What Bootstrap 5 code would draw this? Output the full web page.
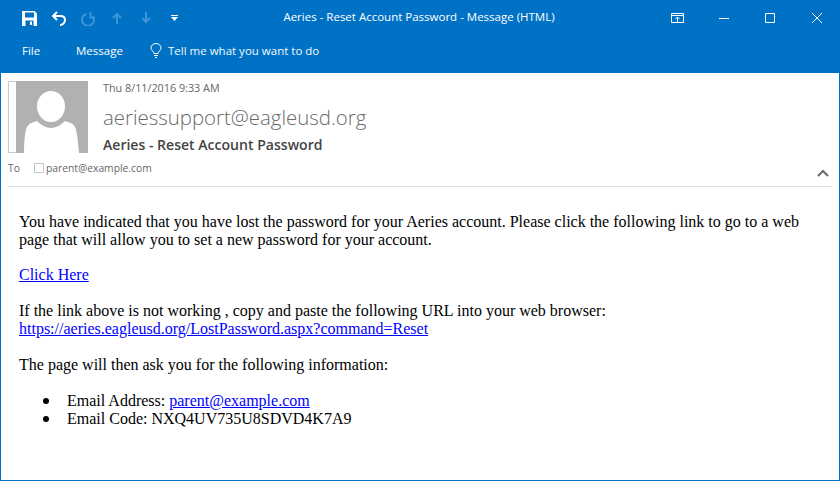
<!DOCTYPE html>
<html lang="en">
  <head>
    <meta charset="UTF-8" />
    <meta name="viewport" content="width=device-width, initial-scale=1.0" />
    <link
      href="https://cdn.jsdelivr.net/npm/bootstrap@5.3.0/dist/css/bootstrap.min.css"
      rel="stylesheet"
    />
    <title>Aeries - Reset Account Password - Message (HTML)</title>
    <style>
      html, body {
        height: 481px;
        overflow: hidden;
      }

      body {
        background-color: #fff;
        font-family: "Open Sans", "Noto Sans", sans-serif;
      }

      .mail-window {
        height: 481px;
        border: 1px solid #0072c6;
        border-top: 0;
      }

      .mail-top {
        background-color: #0072c6;
        color: #fff;
        height: 73px;
        margin: 0 -1px;
      }

      .title-row {
        height: 36px;
        position: relative;
        padding-left: 15px;
      }

      .title-text {
        position: absolute;
        left: 0;
        right: 0;
        top: 9px;
        text-align: center;
        font-size: 11.5px;
        line-height: 16px;
        padding-right: 2px;
      }

      .quick-slot {
        width: 29px;
        height: 24px;
      }

      .win-icons {
        margin-left: auto;
        position: relative;
        z-index: 1;
      }

      .win-slot {
        width: 46.5px;
        height: 32px;
      }

      .menu-row {
        height: 37px;
        padding-left: 22px;
        font-size: 11.5px;
        padding-bottom: 8px;
      }

      .menu-item-file {
        width: 54px;
      }

      .menu-item-msg {
        width: 74px;
      }

      .tell-me {
        gap: 6px;
        color: #f2f8fc;
      }

      .msg-head {
        position: relative;
        height: 114px;
        margin: 0 7px;
        border-bottom: 1px solid #e1e1e1;
        padding-top: 8px;
      }

      .avatar-box {
        width: 80px;
        height: 72px;
        flex-shrink: 0;
      }

      .avatar-box svg {
        display: block;
      }

      .head-text {
        padding-left: 15px;
        color: #444;
      }

      .sent-date {
        font-size: 10.8px;
        line-height: 14px;
        color: #666;
      }

      .sender {
        font-size: 20.4px;
        line-height: 26px;
        margin-top: 9px;
        color: #6a6a6a;
        font-weight: 300;
      }

      .subject {
        font-size: 14.05px;
        line-height: 20px;
        margin-top: 5px;
        color: #444;
        font-weight: 600;
      }

      .to-row {
        font-size: 10.3px;
        line-height: 14px;
        color: #666;
        margin-top: 6px;
      }

      .to-label {
        width: 26px;
      }

      .to-check {
        width: 10px;
        height: 10px;
        border: 1px solid #c8c8c8;
        margin-right: 2px;
      }

      .collapse-arrow {
        position: absolute;
        right: 3px;
        top: 96px;
      }

      .msg-body {
        padding: 26px 12px 0 18px;
        font-family: "Liberation Serif", serif;
        font-size: 16px;
        line-height: 18px;
        color: #000;
      }

      .msg-body p {
        margin-bottom: 18px;
      }

      .msg-body .intro-text {
        margin-bottom: 17px;
      }

      .msg-body a {
        color: #0000ff;
      }

      .msg-body ul {
        margin: 0;
        padding-left: 48px;
        list-style: none;
      }

      .msg-body li::before {
        content: "";
        display: inline-block;
        width: 6px;
        height: 6px;
        border-radius: 50%;
        background-color: #000;
        margin-left: -24px;
        margin-right: 18px;
        vertical-align: 2px;
      }
    </style>
  </head>

  <body>
    <div class="mail-window">
      <header class="mail-top">
        <div class="title-row d-flex align-items-center">
          <div class="d-flex align-items-center">
            <div class="quick-slot d-flex align-items-center justify-content-center">
              <svg width="15" height="15" viewBox="0 0 15 15">
                <path fill="#fff" fill-rule="evenodd" d="M0 0h12.500l2.500 2.500V15H0zM3 1.500v5h9v-5zM3.500 9.500V15h8V9.500zM8 10.500h2v3.500H8z" />
              </svg>
            </div>
            <div class="quick-slot d-flex align-items-center justify-content-center">
              <svg width="15" height="15" viewBox="0 0 15 15" fill="none" stroke="#fff" stroke-width="2">
                <path d="M6 1 2 5l4 4M2 5h7.500c2.500 0 4.500 1.500 4.500 4s-2 5-5 5" />
              </svg>
            </div>
            <div class="quick-slot d-flex align-items-center justify-content-center">
              <svg width="14" height="15" viewBox="0 0 14 15" fill="none" stroke="#3d94d6" stroke-width="2">
                <path d="M5.500 3A6 6 0 1 0 12 5.500M9.500 1v5.500H14" />
              </svg>
            </div>
            <div class="quick-slot d-flex align-items-center justify-content-center">
              <svg width="10" height="12" viewBox="0 0 10 12" fill="none" stroke="#3d94d6" stroke-width="2">
                <path d="M5 12V2M1 6l4-4 4 4" />
              </svg>
            </div>
            <div class="quick-slot d-flex align-items-center justify-content-center">
              <svg width="10" height="12" viewBox="0 0 10 12" fill="none" stroke="#3d94d6" stroke-width="2">
                <path d="M5 0v10M1 6l4 4 4-4" />
              </svg>
            </div>
            <div class="quick-slot d-flex align-items-center justify-content-center">
              <svg width="7" height="6" viewBox="0 0 7 6">
                <path fill="#fff" d="M0 0h7v1H0zM0 2h7L3.500 6z" />
              </svg>
            </div>
          </div>
          <div class="title-text">Aeries - Reset Account Password - Message (HTML)</div>
          <div class="win-icons d-flex align-items-center">
            <div class="win-slot d-flex align-items-center justify-content-center">
              <svg width="13" height="10" viewBox="0 0 13 10" fill="none" stroke="#fff">
                <path d="M.5.500h12v9H.500zM.5 2.500h12M6.500 9.500V4.500M4.500 6l2-2 2 2" />
              </svg>
            </div>
            <div class="win-slot d-flex align-items-center justify-content-center">
              <svg width="10" height="10" viewBox="0 0 10 10" stroke="#fff"><path d="M0 5.500h10" /></svg>
            </div>
            <div class="win-slot d-flex align-items-center justify-content-center">
              <svg width="10" height="10" viewBox="0 0 10 10" fill="none" stroke="#fff"><path d="M.5.500h9v9h-9z" /></svg>
            </div>
            <div class="win-slot d-flex align-items-center justify-content-center">
              <svg width="10" height="10" viewBox="0 0 10 10" fill="none" stroke="#fff"><path d="M0 0l10 10M10 0 0 10" /></svg>
            </div>
          </div>
        </div>
        <nav class="menu-row d-flex align-items-center">
          <span class="menu-item-file">File</span>
          <span class="menu-item-msg">Message</span>
          <span class="tell-me d-flex align-items-center">
            <svg width="12" height="15" viewBox="0 0 12 15" fill="none" stroke="#fff">
              <path d="M4 10.500C4 8.500 1 7.500 1 5a5 4.500 0 0 1 10 0c0 2.500-3 3.500-3 5.500zM4 12.500h4M5 14.500h2" />
            </svg>
            Tell me what you want to do
          </span>
        </nav>
      </header>

      <section class="msg-head">
        <div class="d-flex">
          <div class="avatar-box">
            <svg width="80" height="72" viewBox="0 0 80 72">
              <path fill="none" stroke="#c8c8c8" d="M8 .500H.500v71H8" />
              <g transform="translate(8 0)">
                <rect width="72" height="72" fill="#b1b1b1" />
                <ellipse cx="35" cy="25.500" rx="14" ry="15.500" fill="#fff" />
                <path fill="#fff" d="M8 72C8 60 9 50 11 46 13 42 18 41 21 40 25 44 30 47 35 47 40 47 45 44 49 40 52 41 57 42 59 46 61 50 62 60 63 72z" />
              </g>
            </svg>
          </div>
          <div class="head-text">
            <div class="sent-date">Thu 8/11/2016 9:33 AM</div>
            <div class="sender">aeriessupport@eagleusd.org</div>
            <div class="subject">Aeries - Reset Account Password</div>
          </div>
        </div>
        <div class="to-row d-flex align-items-center">
          <span class="to-label">To</span>
          <span class="to-check"></span>
          <span>parent@example.com</span>
        </div>
        <svg class="collapse-arrow" width="12" height="8" viewBox="0 0 12 8" fill="none" stroke="#6a6a6a" stroke-width="2">
          <path d="M1 7l5-5 5 5" />
        </svg>
      </section>

      <main class="msg-body">
        <p class="intro-text">You have indicated that you have lost the password for your Aeries account. Please click the following link to go to a web page that will allow you to set a new password for your account.</p>
        <p><a href="#">Click Here</a></p>
        <p>If the link above is not working , copy and paste the following URL into your web browser:<br /><a href="#">https://aeries.eagleusd.org/LostPassword.aspx?command=Reset</a></p>
        <p>The page will then ask you for the following information:</p>
        <ul>
          <li>Email Address: <a href="#">parent@example.com</a></li>
          <li>Email Code: NXQ4UV735U8SDVD4K7A9</li>
        </ul>
      </main>
    </div>

    <script src="https://cdn.jsdelivr.net/npm/bootstrap@5.3.0/dist/js/bootstrap.bundle.min.js"></script>
  </body>
</html>
